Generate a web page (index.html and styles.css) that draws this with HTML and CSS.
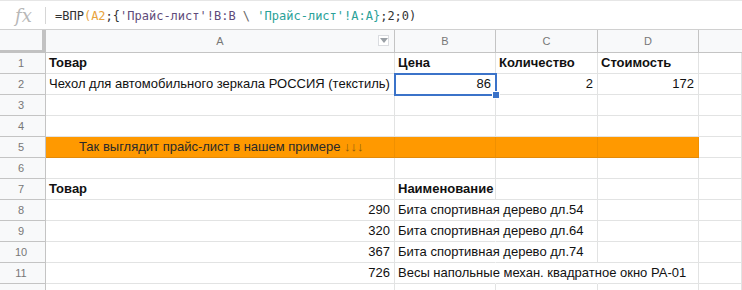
FILE: index.html
```html
<!DOCTYPE html>
<html lang="ru">
<head>
<meta charset="utf-8">
<title>ВПР</title>
<link rel="stylesheet" href="styles.css">
</head>
<body>
<div class="formula-bar">
  <span class="fx">fx</span>
  <span class="fsep"></span>
  <span class="formula"><span class="f-dark">=ВПР</span><span class="f-org">(A2</span><span class="f-dark">;{</span><span class="f-pur">'Прайс-лист'!B:B</span><span class="f-gray"> \ </span><span class="f-teal">'Прайс-лист'!A:A}</span><span class="f-dark">;2;0)</span></span>
</div>
<div class="sheet">
  <div class="hd corner"></div>
  <div class="hd col">A<span class="filter"><svg width="8" height="5" viewBox="0 0 8 5"><path d="M0 0h8L4 5z" fill="#9aa0a6"/></svg></span></div>
  <div class="hd col">B</div>
  <div class="hd col">C</div>
  <div class="hd col">D</div>
  <div class="hd col last"></div>

  <div class="rn">1</div>
  <div class="c b">Товар</div>
  <div class="c b">Цена</div>
  <div class="c b">Количество</div>
  <div class="c b">Стоимость</div>
  <div class="c"></div>

  <div class="rn">2</div>
  <div class="c">Чехол для автомобильного зеркала РОССИЯ (текстиль)</div>
  <div class="c r sel">86<span class="handle"></span></div>
  <div class="c r">2</div>
  <div class="c r">172</div>
  <div class="c"></div>

  <div class="rn">3</div>
  <div class="c"></div><div class="c"></div><div class="c"></div><div class="c"></div><div class="c"></div>

  <div class="rn">4</div>
  <div class="c"></div><div class="c"></div><div class="c"></div><div class="c"></div><div class="c"></div>

  <div class="rn">5</div>
  <div class="c orange banner">Так выглядит прайс-лист в нашем примере <span class="arrows">↓↓↓</span></div>
  <div class="c orange"></div>
  <div class="c orange"></div>
  <div class="c orange"></div>
  <div class="c"></div>

  <div class="rn">6</div>
  <div class="c"></div><div class="c"></div><div class="c"></div><div class="c"></div><div class="c"></div>

  <div class="rn">7</div>
  <div class="c b">Товар</div>
  <div class="c b">Наименование</div>
  <div class="c"></div><div class="c"></div><div class="c"></div>

  <div class="rn">8</div>
  <div class="c r">290</div>
  <div class="c nob">Бита спортивная дерево дл.54</div>
  <div class="c"></div><div class="c"></div><div class="c"></div>

  <div class="rn">9</div>
  <div class="c r">320</div>
  <div class="c nob">Бита спортивная дерево дл.64</div>
  <div class="c"></div><div class="c"></div><div class="c"></div>

  <div class="rn">10</div>
  <div class="c r">367</div>
  <div class="c nob">Бита спортивная дерево дл.74</div>
  <div class="c"></div><div class="c"></div><div class="c"></div>

  <div class="rn">11</div>
  <div class="c r">726</div>
  <div class="c nob">Весы напольные механ. квадратное окно РА-01</div>
  <div class="c nob"></div><div class="c"></div><div class="c"></div>

  <div class="rn"></div>
  <div class="c"></div><div class="c"></div><div class="c"></div><div class="c"></div><div class="c"></div>
</div>
</body>
</html>
```
FILE: styles.css
```css
* { box-sizing: border-box; }
html, body { margin: 0; padding: 0; background: #fff; overflow: hidden; }
body { font-family: "Liberation Sans", Arial, sans-serif; font-size: 13px; color: #000; }

.formula-bar {
  height: 30px;
  border-top: 1px solid #e6e6e6;
  border-bottom: 1px solid #d0d0d0;
  display: flex;
  align-items: center;
  padding-top: 1px;
}
.fx {
  width: 45px;
  padding-left: 15px;
  font-family: "DejaVu Serif", "Liberation Serif", serif;
  font-style: italic;
  font-size: 18px;
  color: #b8b8b8;
}
.fsep { width: 1px; height: 17px; background: #d6d6d6; }
.formula {
  padding-left: 9px;
  font-family: "DejaVu Sans Mono", "Liberation Mono", monospace;
  font-size: 12px;
  white-space: pre;
}
.f-dark { color: #333; }
.f-org { color: #e8a33d; }
.f-pur { color: #5f4b7a; }
.f-gray { color: #666; }
.f-teal { color: #2aa198; }

.sheet {
  display: grid;
  grid-template-columns: 46px 349px 101px 102px 101px 1fr;
  grid-template-rows: 23px repeat(12, 21px);
}
.hd {
  background: #f8f9fa;
  border-bottom: 1px solid #c4c4c4;
  border-right: 1px solid #c4c4c4;
  color: #777;
  font-size: 11px;
  display: flex;
  align-items: center;
  justify-content: center;
  position: relative;
}
.hd.last { border-right: none; }
.corner {
  border-right: 4px solid #c2c2c2;
  border-bottom: 3px solid #c2c2c2;
}
.filter {
  position: absolute;
  right: 5px;
  top: 5px;
  width: 11px;
  height: 11px;
  border: 1px solid #dadce0;
  background: #fff;
  display: flex;
  align-items: center;
  justify-content: center;
}
.rn {
  background: #f8f9fa;
  border-right: 1px solid #c4c4c4;
  border-bottom: 1px solid #c4c4c4;
  color: #777;
  font-size: 11px;
  display: flex;
  align-items: center;
  justify-content: center;
  padding-right: 3px;
}
.c {
  border-right: 1px solid #e2e3e3;
  border-bottom: 1px solid #e2e3e3;
  padding: 0 3px;
  line-height: 20px;
  white-space: nowrap;
  overflow: visible;
  position: relative;
  color: #111;
}
.c.b { font-weight: bold; }
.c.r { text-align: right; padding-right: 4px; }
.c.nob { border-right-color: transparent; }
.orange { background: #ff9900; border-right-color: rgba(0,0,0,0.06); border-bottom-color: #e28a0a; }
.banner { padding-left: 33px; color: #2a2a2a; }
.arrows { color: #8a5a10; }
.sel {
  outline: 2px solid #3b73c9;
  outline-offset: -1px;
  z-index: 2;
}
.handle {
  position: absolute;
  right: -5px;
  bottom: -5px;
  width: 8px;
  height: 8px;
  background: #3b73c9;
  border: 1px solid #fff;
  z-index: 3;
}
```
